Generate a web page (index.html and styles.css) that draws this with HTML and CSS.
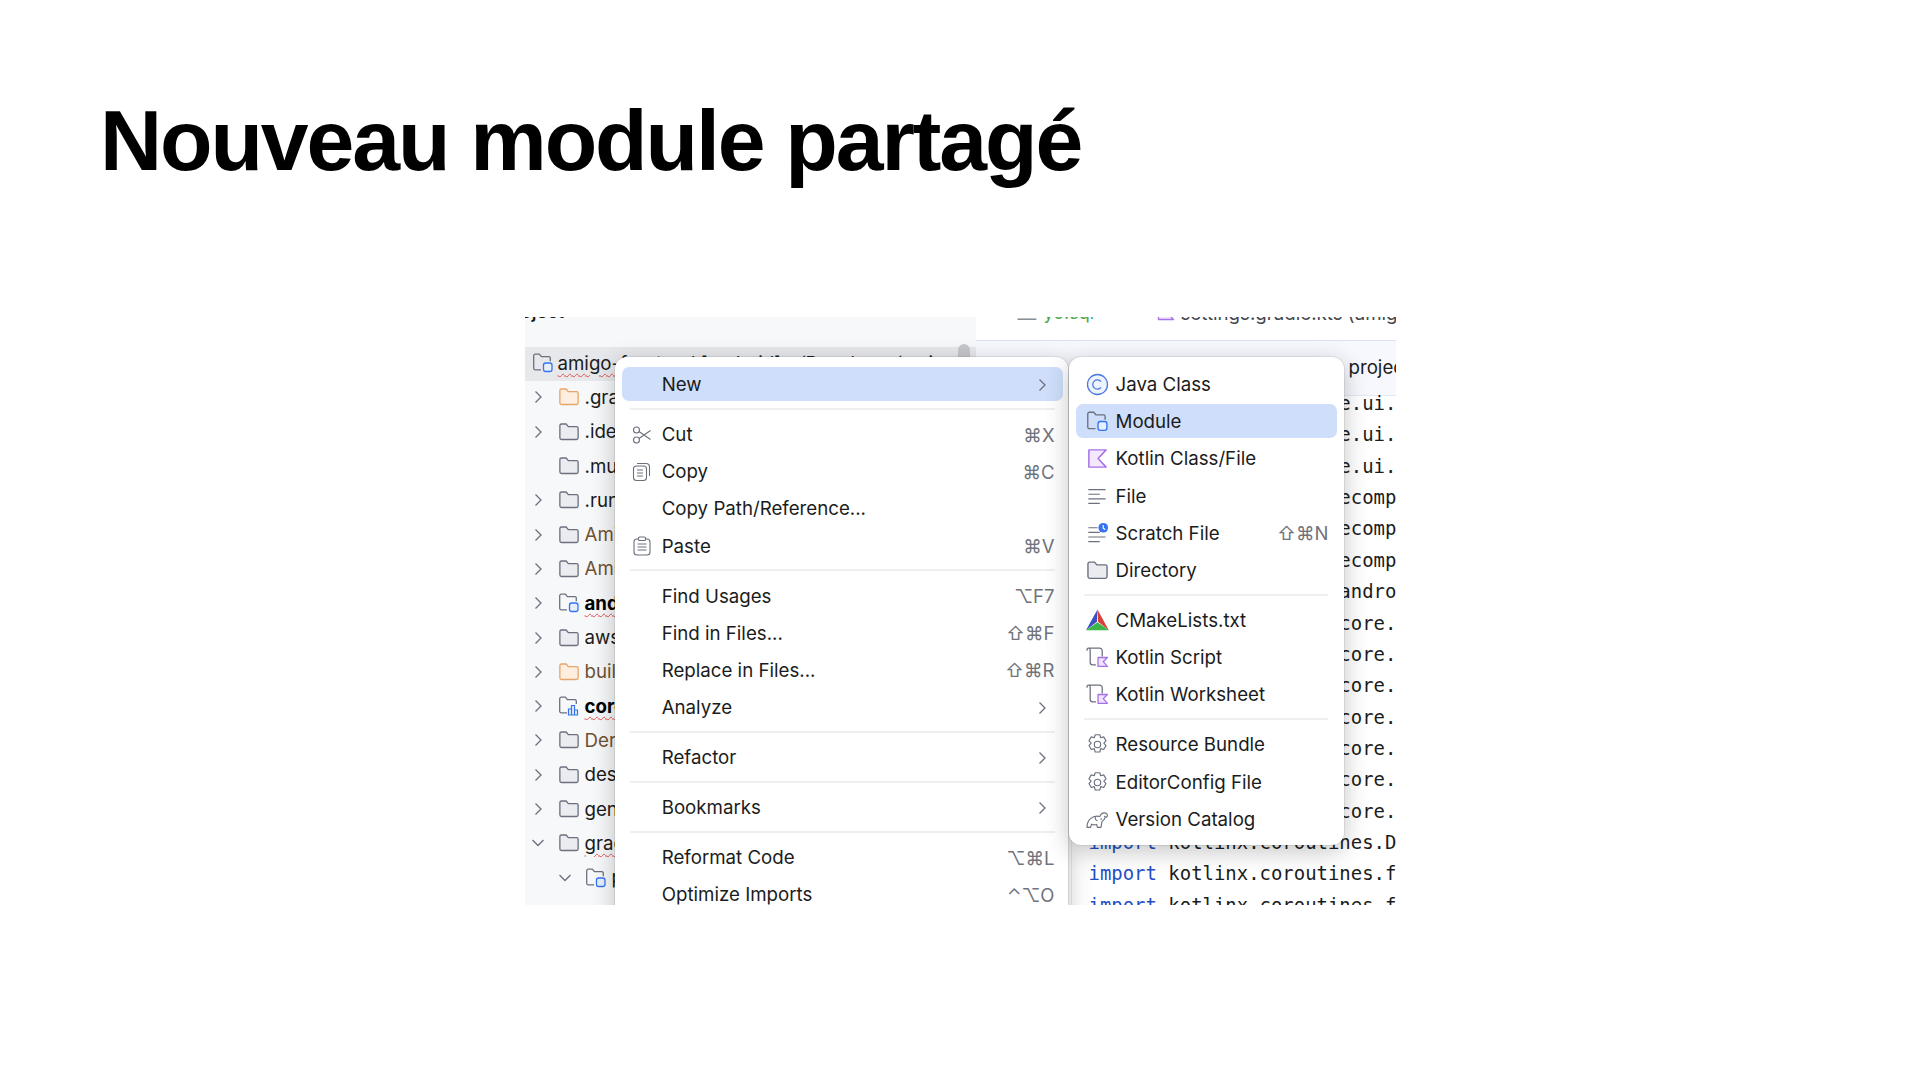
FILE: index.html
```html
<!DOCTYPE html>
<html lang="fr">
<head>
<meta charset="utf-8">
<title>Nouveau module partagé</title>
<link rel="stylesheet" href="styles.css">
</head>
<body>
<svg class="sprite" xmlns="http://www.w3.org/2000/svg">
  <symbol id="i-folder" viewBox="0 0 20 20"><path d="M1.7 4.2a1.5 1.5 0 0 1 1.5-1.5h4.2l2 2.4h7.4a1.5 1.5 0 0 1 1.500 1.500v8.700a1.500 1.500 0 0 1-1.500 1.500H3.200a1.500 1.500 0 0 1-1.500-1.500z" fill="#ebecf0" stroke="#6c707e" stroke-width="1.2"/></symbol>
  <symbol id="i-folder-o" viewBox="0 0 20 20"><path d="M1.700 4.200a1.500 1.500 0 0 1 1.500-1.500h4.200l2 2.400h7.400a1.500 1.500 0 0 1 1.500 1.500v8.700a1.500 1.500 0 0 1-1.500 1.500H3.200a1.500 1.500 0 0 1-1.500-1.500z" fill="#fdeee0" stroke="#e8a56a" stroke-width="1.2"/></symbol>
  <symbol id="i-module" viewBox="0 0 22 22"><path d="M9 17.800H3.200a1.500 1.500 0 0 1-1.500-1.500V3.700a1.500 1.500 0 0 1 1.500-1.500h4.200l2 2.400h7.400a1.500 1.500 0 0 1 1.500 1.500v3.200" fill="none" stroke="#6c707e" stroke-width="1.300"/><rect x="11.500" y="11" width="8.500" height="8.500" rx="2.200" fill="#e7effd" stroke="#3574f0" stroke-width="1.300"/></symbol>
  <symbol id="i-module-bar" viewBox="0 0 22 22"><path d="M9 17.800H3.200a1.500 1.500 0 0 1-1.500-1.500V3.700a1.500 1.500 0 0 1 1.500-1.500h4.200l2 2.400h7.400a1.500 1.500 0 0 1 1.500 1.500v3" fill="none" stroke="#6c707e" stroke-width="1.300"/><path d="M10.500 20v-6h3v6zM13.500 20V10.500h3V20zM16.500 20v-5h3v5z" fill="#e7effd" stroke="#3574f0" stroke-width="1.200"/></symbol>
  <symbol id="i-java" viewBox="0 0 20 20"><circle cx="10" cy="10" r="8.700" fill="#eef3fe" stroke="#4a78e0" stroke-width="1.100"/><path d="M13 7.500a4 4 0 1 0 0 5" fill="none" stroke="#4a78e0" stroke-width="1.100"/></symbol>
  <symbol id="i-kotlin" viewBox="0 0 20 20"><path d="M2.500 2.500H17.500L10.500 10L17.500 17.500H2.500Z" fill="#f3e8fd" stroke="#a571e6" stroke-width="1.300" stroke-linejoin="round"/></symbol>
  <symbol id="i-file" viewBox="0 0 20 20"><path d="M2 4h15M2 8h10M2 12h15M2 16h10" stroke="#6c707e" stroke-width="1" fill="none"/></symbol>
  <symbol id="i-scratch" viewBox="0 0 20 20"><path d="M2 5h8M2 9h10M2 13h15M2 17h10" stroke="#6c707e" stroke-width="1" fill="none"/><circle cx="15" cy="5" r="4.200" fill="#3574f0"/><path d="M15 2.500V5.500L16.800 6.500" stroke="#fff" stroke-width="1" fill="none"/></symbol>
  <symbol id="i-cmake" viewBox="0 0 20 20"><path d="M10 0.500L10.500 11L19.800 18.500z" fill="#dc3e3a"/><path d="M10 0.500L0 18.500L9.500 11z" fill="#3c4fc4"/><path d="M0 18.500H20L10 11.500z" fill="#3eb54a"/></symbol>
  <symbol id="i-kscript" viewBox="0 0 22 22"><path d="M1 4.500V3.500a1.500 1.500 0 0 1 3 0V15.500a2.500 2.500 0 0 0 2.500 2.500h3M2.500 2H13a2.500 2.500 0 0 1 2.500 2.500v5.500" fill="none" stroke="#6c707e" stroke-width="1.200"/><path d="M11.500 11h9l-4 4 4 4.500h-9z" fill="#f0e2fd" stroke="#a571e6" stroke-width="1.200" stroke-linejoin="round"/></symbol>
  <symbol id="i-gear" viewBox="0 0 20 20"><path d="M8 1.500h4l.8 2.600 2.600-.7 2 3.400-1.900 2 1.900 2.100-2 3.400-2.600-.7-.8 2.900H8l-.8-2.900-2.600.7-2-3.400 1.900-2.100-1.900-2 2-3.400 2.600.7z" fill="none" stroke="#6c707e" stroke-width="1" stroke-linejoin="round"/><circle cx="10" cy="10" r="2.800" fill="none" stroke="#6c707e" stroke-width="1"/></symbol>
  <symbol id="i-gradle" viewBox="0 0 22 22"><path d="M1 18.500c0-3.300 1-6.400 3.300-8.300 2.500-2.200 6-2.900 8.900-2.100.8-2 2.200-3.500 4.300-3.500 1.900 0 3.100 1.300 2.900 2.900-.2 1.400-2.100 1.700-2.700.5M1 18.500h3.400l.9-3c1.600.8 3.300.8 4.900.2l.7 2.800h3.400l1-5.600c1.200-.6 2.400-1.800 2.800-3.400" fill="none" stroke="#6c707e" stroke-width="1.100" stroke-linejoin="round" stroke-linecap="round"/><path d="M9 8.500c-.5 1.700.4 3.200 2 3.700" fill="none" stroke="#6c707e" stroke-width="1"/><circle cx="14.500" cy="10.500" r=".8" fill="#6c707e"/></symbol>
  <symbol id="i-cut" viewBox="0 0 20 20"><circle cx="4.500" cy="5" r="3" fill="none" stroke="#6c707e" stroke-width="1.100"/><circle cx="4.500" cy="15" r="3" fill="none" stroke="#6c707e" stroke-width="1.100"/><path d="M7 6.500L18.500 14.500M7 13.500L18.500 5.500" stroke="#6c707e" stroke-width="1.100" fill="none"/></symbol>
  <symbol id="i-copy" viewBox="0 0 20 20"><rect x="1.500" y="4" width="13" height="14.500" rx="3" fill="none" stroke="#6c707e" stroke-width="1.100"/><path d="M5 1.500h9a3.500 3.500 0 0 1 3.500 3.500v9" fill="none" stroke="#6c707e" stroke-width="1.100"/><path d="M5 8h6M5 11h6M5 14h6" stroke="#6c707e" stroke-width="1.100"/></symbol>
  <symbol id="i-paste" viewBox="0 0 20 20"><rect x="2" y="3" width="16" height="16" rx="3" fill="none" stroke="#6c707e" stroke-width="1.100"/><rect x="6.500" y="1" width="7" height="3.500" rx="1" fill="#fff" stroke="#6c707e" stroke-width="1.100"/><path d="M5.500 8h9M5.500 11h9M5.500 14h9" stroke="#6c707e" stroke-width="1.100"/></symbol>
  <symbol id="i-right" viewBox="0 0 12 16"><path d="M3.500 2.500L9 8L3.500 13.500" fill="none" stroke="#6c707e" stroke-width="1.300"/></symbol>
  <symbol id="i-down" viewBox="0 0 16 12"><path d="M2.500 3L8 8.500L13.500 3" fill="none" stroke="#6c707e" stroke-width="1.300"/></symbol>
</svg>

<header class="head"><h1 class="title">Nouveau module partagé</h1></header>

<figure class="shot">
  <section class="tree">
    <div class="tree-title">Project</div>
    <ul class="tree-list">
      <li class="row row-root"><svg class="fico"><use href="#i-module"/></svg><span class="name"><span class="wavy">amigo-</span><span>frontend [android] ~/Developer/amigo</span></span><span class="thumb"></span></li>
      <li class="row"><svg class="arrow"><use href="#i-right"/></svg><svg class="fico"><use href="#i-folder-o"/></svg><span class="name">.gradle</span></li>
      <li class="row"><svg class="arrow"><use href="#i-right"/></svg><svg class="fico"><use href="#i-folder"/></svg><span class="name">.idea</span></li>
      <li class="row row-noarrow"><svg class="fico"><use href="#i-folder"/></svg><span class="name">.multi</span></li>
      <li class="row"><svg class="arrow"><use href="#i-right"/></svg><svg class="fico"><use href="#i-folder"/></svg><span class="name">.run</span></li>
      <li class="row"><svg class="arrow"><use href="#i-right"/></svg><svg class="fico"><use href="#i-folder"/></svg><span class="name brown">Amigo</span></li>
      <li class="row"><svg class="arrow"><use href="#i-right"/></svg><svg class="fico"><use href="#i-folder"/></svg><span class="name brown">Amigo</span></li>
      <li class="row"><svg class="arrow"><use href="#i-right"/></svg><svg class="fico"><use href="#i-module"/></svg><span class="name strong wavy">android</span></li>
      <li class="row"><svg class="arrow"><use href="#i-right"/></svg><svg class="fico"><use href="#i-folder"/></svg><span class="name">aws</span></li>
      <li class="row"><svg class="arrow"><use href="#i-right"/></svg><svg class="fico"><use href="#i-folder-o"/></svg><span class="name brown">build</span></li>
      <li class="row"><svg class="arrow"><use href="#i-right"/></svg><svg class="fico"><use href="#i-module-bar"/></svg><span class="name strong wavy">core</span></li>
      <li class="row"><svg class="arrow"><use href="#i-right"/></svg><svg class="fico"><use href="#i-folder"/></svg><span class="name brown">Derived</span></li>
      <li class="row"><svg class="arrow"><use href="#i-right"/></svg><svg class="fico"><use href="#i-folder"/></svg><span class="name">design</span></li>
      <li class="row"><svg class="arrow"><use href="#i-right"/></svg><svg class="fico"><use href="#i-folder"/></svg><span class="name">generated</span></li>
      <li class="row"><svg class="arrow arrow-down"><use href="#i-down"/></svg><svg class="fico"><use href="#i-folder"/></svg><span class="name wavy">gradle</span></li>
      <li class="row row-sub"><svg class="arrow arrow-down"><use href="#i-down"/></svg><svg class="fico"><use href="#i-module"/></svg><span class="name">plugins</span></li>
    </ul>
  </section>

  <section class="editor">
    <div class="tabs"><span class="tab-dash">—</span><span class="tab-sql">yo.sql</span><svg class="tab-ico"><use href="#i-kotlin"/></svg><span class="tab-name">settings.gradle.kts (amigo</span></div>
    <div class="notice">project</div>
    <div class="code">
      <div class="line cut">e.ui.</div>
      <div class="line cut">e.ui.</div>
      <div class="line cut">e.ui.</div>
      <div class="line cut">ecomp</div>
      <div class="line cut">ecomp</div>
      <div class="line cut">ecomp</div>
      <div class="line cut">andro</div>
      <div class="line cut">core.</div>
      <div class="line cut">core.</div>
      <div class="line cut">core.</div>
      <div class="line cut">core.</div>
      <div class="line cut">core.</div>
      <div class="line cut">core.</div>
      <div class="line cut">core.</div>
      <div class="line"><span class="kw">import</span> kotlinx.coroutines.D</div>
      <div class="line"><span class="kw">import</span> kotlinx.coroutines.f</div>
      <div class="line"><span class="kw">import</span> kotlinx.coroutines.f</div>
    </div>
  </section>

  <ul class="menu menu-main">
    <li class="item active"><span class="slot"></span><span class="label">New</span><svg class="more"><use href="#i-right"/></svg></li>
    <li class="sep"></li>
    <li class="item"><svg class="slot"><use href="#i-cut"/></svg><span class="label">Cut</span><span class="key">⌘X</span></li>
    <li class="item"><svg class="slot"><use href="#i-copy"/></svg><span class="label">Copy</span><span class="key">⌘C</span></li>
    <li class="item"><span class="slot"></span><span class="label">Copy Path/Reference...</span></li>
    <li class="item"><svg class="slot"><use href="#i-paste"/></svg><span class="label">Paste</span><span class="key">⌘V</span></li>
    <li class="sep"></li>
    <li class="item"><span class="slot"></span><span class="label">Find Usages</span><span class="key">⌥F7</span></li>
    <li class="item"><span class="slot"></span><span class="label">Find in Files...</span><span class="key">⇧⌘F</span></li>
    <li class="item"><span class="slot"></span><span class="label">Replace in Files...</span><span class="key">⇧⌘R</span></li>
    <li class="item"><span class="slot"></span><span class="label">Analyze</span><svg class="more"><use href="#i-right"/></svg></li>
    <li class="sep"></li>
    <li class="item"><span class="slot"></span><span class="label">Refactor</span><svg class="more"><use href="#i-right"/></svg></li>
    <li class="sep"></li>
    <li class="item"><span class="slot"></span><span class="label">Bookmarks</span><svg class="more"><use href="#i-right"/></svg></li>
    <li class="sep"></li>
    <li class="item"><span class="slot"></span><span class="label">Reformat Code</span><span class="key">⌥⌘L</span></li>
    <li class="item"><span class="slot"></span><span class="label">Optimize Imports</span><span class="key">⌃⌥O</span></li>
  </ul>

  <ul class="menu menu-sub">
    <li class="item"><svg class="slot"><use href="#i-java"/></svg><span class="label">Java Class</span></li>
    <li class="item active"><svg class="slot"><use href="#i-module"/></svg><span class="label">Module</span></li>
    <li class="item"><svg class="slot"><use href="#i-kotlin"/></svg><span class="label">Kotlin Class/File</span></li>
    <li class="item"><svg class="slot"><use href="#i-file"/></svg><span class="label">File</span></li>
    <li class="item"><svg class="slot"><use href="#i-scratch"/></svg><span class="label">Scratch File</span><span class="key">⇧⌘N</span></li>
    <li class="item"><svg class="slot"><use href="#i-folder"/></svg><span class="label">Directory</span></li>
    <li class="sep"></li>
    <li class="item"><svg class="slot"><use href="#i-cmake"/></svg><span class="label">CMakeLists.txt</span></li>
    <li class="item"><svg class="slot"><use href="#i-kscript"/></svg><span class="label">Kotlin Script</span></li>
    <li class="item"><svg class="slot"><use href="#i-kscript"/></svg><span class="label">Kotlin Worksheet</span></li>
    <li class="sep"></li>
    <li class="item"><svg class="slot"><use href="#i-gear"/></svg><span class="label">Resource Bundle</span></li>
    <li class="item"><svg class="slot"><use href="#i-gear"/></svg><span class="label">EditorConfig File</span></li>
    <li class="item"><svg class="slot"><use href="#i-gradle"/></svg><span class="label">Version Catalog</span></li>
  </ul>
</figure>
</body>
</html>
```

FILE: styles.css
```css
* { box-sizing: border-box; }
html, body { margin: 0; padding: 0; background: #fff; }
body { width: 1920px; height: 1080px; overflow: hidden; font-family: Inter, "Noto Sans", sans-serif; color: #1b1c20; }
ul { list-style: none; margin: 0; padding: 0; }
.sprite { position: absolute; width: 0; height: 0; overflow: hidden; }

.head { padding: 85px 0 0 100px; height: 317px; }
.title { margin: 0; font: 700 86px/110px "Liberation Sans", Arial, sans-serif; letter-spacing: -2.1px; color: #000; }

.shot { position: relative; margin: 0 auto; width: 871px; height: 588px; overflow: hidden; display: flex; background: #fff; }

.tree { width: 451px; flex: none; background: #f7f8fa; overflow: hidden; font-size: 18.7px; }
.tree-title { height: 30px; margin-top: -16px; margin-bottom: 16px; margin-left: -22px; font-size: 18px; font-weight: 600; line-height: 22px; }
.tree-list { display: flex; flex-direction: column; }
.row { position: relative; height: 34.3px; display: flex; align-items: center; padding: 0 0 2px 7px; white-space: nowrap; }
.arrow { width: 12px; height: 16px; margin-right: 14px; flex: none; }
.arrow-down { width: 16px; height: 12px; margin-left: -2px; margin-right: 12px; }
.row-noarrow { padding-left: 33px; }
.row-sub { padding-left: 34px; }
.fico { width: 22px; height: 22px; flex: none; margin-right: 5px; }
.row-root { background: #e7e8eb; padding-left: 7px; }
.row-root .fico { margin-right: 4px; }
.thumb { position: absolute; left: 433px; top: -3px; width: 12px; height: 30px; border-radius: 6px; background: #c6c7ca; }
.name { display: inline-block; }
.brown { color: #6f5234; }
.strong { font-weight: 700; color: #000; }
.wavy { text-decoration: underline wavy #e0504d 1.4px; text-underline-offset: 3px; }

.editor { flex: 1; min-width: 0; display: flex; flex-direction: column; overflow: hidden; background: #fff; }
.tabs { height: 23px; flex: none; display: flex; align-items: flex-start; padding-left: 42px; overflow: hidden; font-size: 18.700px; white-space: nowrap; }
.tabs span { margin-top: -15px; }
.tabs .tab-dash { margin-top: -10px; color: #8a8d94; width: 26px; flex: none; }
.tab-sql { color: #4aa84a; width: 112px; flex: none; font-size: 18px; }
.tab-ico { width: 20px; height: 20px; flex: none; margin-top: -15px; margin-right: 5px; }
.tab-name { color: #44464c; }
.notice { height: 56px; flex: none; background: #f6f8fe; border-top: 1px solid #d9e1f2; border-bottom: 1px solid #e3e8f5; padding-left: 373px; font-size: 18.700px; line-height: 54px; white-space: nowrap; overflow: hidden; color: #1b1c20; }
.code { margin-top: -8px; margin-left: 95px; padding-left: 17px; border-left: 1px solid #eceef1; font: 18.95px/31.36px "DejaVu Sans Mono", monospace; color: #1b1c20; white-space: nowrap; }
.line { height: 31.36px; }
.cut { padding-left: 22ch; }
.kw { color: #2450c4; }

.menu { position: absolute; top: 40px; background: #fff; border-radius: 12px; padding: 8px 0; box-shadow: 0 0 0 1px rgba(0,0,0,.07), 0 6px 24px rgba(0,0,0,.24); font-size: 18.700px; color: #1b1c20; }
.menu-main { left: 90px; width: 453px; height: 620px; padding-left: 7px; padding-right: 5px; }
.menu-sub { left: 544px; width: 275px; padding-left: 7px; padding-right: 7px; }
.item { position: relative; height: 37.2px; display: flex; align-items: center; padding: 2px 7px 0 8px; white-space: nowrap; }
.active::before { content: ""; position: absolute; left: 0; right: 0; top: 1.600px; bottom: 1.600px; border-radius: 7px; background: #cfdffb; }
.item > * { position: relative; }
.slot { width: 23px; height: 23px; flex: none; margin-left: 2px; margin-right: 7px; overflow: visible; }
.menu-main .item { padding-left: 0; }
.menu-main .slot { margin-left: 10px; margin-right: 10.200px; width: 20px; height: 20px; }
.label { flex: 1; }
.key { color: #70737c; margin-right: 1px; font-size: 18.500px; }
.more { width: 12px; height: 16px; flex: none; margin-right: 8px; }
.sep { height: 2px; margin: 5.400px 8px; background: #eeeff1; }
.menu-sub .sep { margin-right: 9px; }
```
